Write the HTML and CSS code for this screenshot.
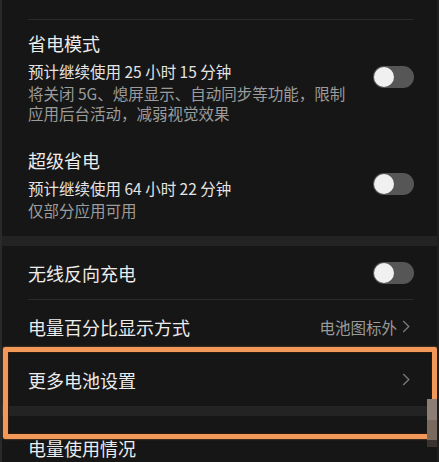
FILE: index.html
```html
<!DOCTYPE html>
<html lang="zh-CN">
<head>
    <meta charset="UTF-8">
    <meta name="viewport" content="width=device-width, initial-scale=1.0">
    <title>电池</title>
    <link rel="stylesheet" href="styles.css">
</head>
<body>
    <div class="screen">
        <div class="top-space"></div>
        <div class="divider"></div>

        <div class="group">
            <div class="item">
                <div class="item-text">
                    <div class="item-title">省电模式</div>
                    <div class="item-sub">预计继续使用 25 小时 15 分钟</div>
                    <div class="item-desc">将关闭 5G、熄屏显示、自动同步等功能，限制<br>应用后台活动，减弱视觉效果</div>
                </div>
                <span class="switch"></span>
            </div>
            <div class="item">
                <div class="item-text">
                    <div class="item-title">超级省电</div>
                    <div class="item-sub">预计继续使用 64 小时 22 分钟</div>
                    <div class="item-desc">仅部分应用可用</div>
                </div>
                <span class="switch"></span>
            </div>
        </div>

        <div class="band"></div>

        <div class="row">
            <span class="row-title">无线反向充电</span>
            <span class="switch"></span>
        </div>
        <div class="divider"></div>
        <div class="row">
            <span class="row-title">电量百分比显示方式</span>
            <span class="row-value"><span>电池图标外</span><svg class="chevron" viewBox="0 0 8 14"><polyline points="1,1 7,7 1,13"/></svg></span>
        </div>
        <div class="row">
            <span class="row-title">更多电池设置</span>
            <span class="row-value"><svg class="chevron" viewBox="0 0 8 14"><polyline points="1,1 7,7 1,13"/></svg></span>
        </div>

        <div class="band"></div>

        <div class="row-head">
            <span class="row-title">电量使用情况</span>
        </div>

        <!-- highlight frame around "更多电池设置" -->
        <div class="highlight"></div>
        <div class="side-tab"></div>
    </div>
</body>
</html>
```

FILE: styles.css
```css
* {
    margin: 0;
    padding: 0;
    box-sizing: border-box;
}

body {
    background-color: #151515;
    font-family: "Noto Sans CJK SC", "Noto Sans", sans-serif;
    color: #e6e6e6;
}

.screen {
    position: relative;
    width: 439px;
    height: 462px;
    overflow: hidden;
    background-color: #161616;
    border-left: 2px solid #2a2a2a;
    border-right: 2px solid #1f1f1f;
}

.top-space {
    height: 19px;
}

.divider {
    height: 1px;
    margin: 0 24px 0 26px;
    background-color: #2b2b2b;
}

.group {
    padding-bottom: 2px;
}

.item {
    display: flex;
    align-items: center;
    justify-content: space-between;
    padding: 10px 23px 14px 26px;
}

.item-title {
    font-size: 18px;
    line-height: 26px;
    color: #ececec;
}

.item-sub {
    margin-top: 3px;
    font-size: 15.5px;
    line-height: 24px;
    color: #e4e4e4;
}

.item-desc {
    font-size: 15.5px;
    line-height: 20px;
    color: #9c9c9c;
}

.switch {
    position: relative;
    flex-shrink: 0;
    width: 41px;
    height: 22px;
    border-radius: 11px;
    background-color: #565656;
}

.switch::after {
    content: "";
    position: absolute;
    left: 1px;
    top: 1px;
    width: 20px;
    height: 20px;
    border-radius: 50%;
    background-color: #f0f0f0;
}

.band {
    height: 10px;
    background-color: #232323;
}

.row {
    display: flex;
    align-items: center;
    justify-content: space-between;
    height: 53px;
    padding: 0 23px 0 26px;
}

.row-title {
    font-size: 18px;
    line-height: 26px;
    color: #ececec;
}

.row-value {
    display: flex;
    align-items: center;
    gap: 5px;
    font-size: 15.5px;
    color: #9a9a9a;
}

.chevron {
    width: 8px;
    height: 13px;
    margin-right: 4px;
}

.chevron polyline {
    fill: none;
    stroke: #7a7a7a;
    stroke-width: 1.4;
}

.row-head {
    padding: 19px 23px 0 26px;
}

.highlight {
    position: absolute;
    left: 1px;
    top: 347px;
    width: 434px;
    height: 92px;
    border: 5px solid #f29859;
    border-radius: 2px;
    box-shadow: inset 0 0 0 1px #2a1a10, 0 0 2px rgba(242, 152, 89, 0.6);
}

.side-tab {
    position: absolute;
    right: -2px;
    top: 399px;
    width: 12px;
    height: 48px;
    background: linear-gradient(#8c7e74 0, #8c7e74 44%, #7b6a5e 44%, #7b6a5e 86%, #3a3330 86%);
}
```
